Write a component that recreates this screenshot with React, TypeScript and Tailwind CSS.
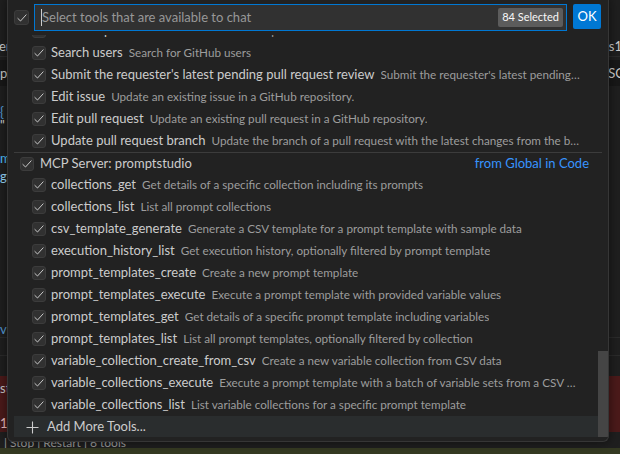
import React from "react"

interface Tool {
  label: string
  desc: string
}

const githubTools: Tool[] = [
  { label: "Search repositories", desc: "Search for GitHub repositories" },
  { label: "Search users", desc: "Search for GitHub users" },
  {
    label: "Submit the requester's latest pending pull request review",
    desc: "Submit the requester's latest pending pull request review",
  },
  { label: "Edit issue", desc: "Update an existing issue in a GitHub repository." },
  { label: "Edit pull request", desc: "Update an existing pull request in a GitHub repository." },
  {
    label: "Update pull request branch",
    desc: "Update the branch of a pull request with the latest changes from the base branch.",
  },
]

const promptTools: Tool[] = [
  { label: "collections_get", desc: "Get details of a specific collection including its prompts" },
  { label: "collections_list", desc: "List all prompt collections" },
  { label: "csv_template_generate", desc: "Generate a CSV template for a prompt template with sample data" },
  { label: "execution_history_list", desc: "Get execution history, optionally filtered by prompt template" },
  { label: "prompt_templates_create", desc: "Create a new prompt template" },
  { label: "prompt_templates_execute", desc: "Execute a prompt template with provided variable values" },
  { label: "prompt_templates_get", desc: "Get details of a specific prompt template including variables" },
  { label: "prompt_templates_list", desc: "List all prompt templates, optionally filtered by collection" },
  { label: "variable_collection_create_from_csv", desc: "Create a new variable collection from CSV data" },
  {
    label: "variable_collections_execute",
    desc: "Execute a prompt template with a batch of variable sets from a CSV collection",
  },
  { label: "variable_collections_list", desc: "List variable collections for a specific prompt template" },
]

const Check = ({ size = 14 }: { size?: number }) => (
  <div
    className="flex items-center justify-center shrink-0 rounded-[3px] border border-[#3c3c3c] bg-[#313131]"
    style={{ width: size, height: size }}
  >
    <svg width="12" height="12" viewBox="0 0 16 16" fill="none">
      <path d="M2.5 8.6 L6 12 L13.5 3.8" stroke="#cccccc" strokeWidth="1.3" strokeLinecap="round" strokeLinejoin="round" />
    </svg>
  </div>
)

const ToolRow = ({ tool }: { tool: Tool }) => (
  <div className="flex items-center h-[22px] pl-[18px] pr-[22px] gap-[5px] min-w-0">
    <Check />
    <div className="flex items-baseline min-w-0">
      <span className="shrink-0 whitespace-nowrap text-[13px] text-[#cccccc]">{tool.label}</span>
      <span className="ml-[6px] min-w-0 truncate text-[11.7px] text-[#9d9d9d]">{tool.desc}</span>
    </div>
  </div>
)

export default function App() {
  return (
    <div
      className="relative w-[620px] h-[454px] overflow-hidden bg-[#1f1f1f]"
      style={{ fontFamily: "Lato, 'Noto Sans', sans-serif" }}
    >
      {/* editor behind the quick pick */}
      <div className="flex flex-col h-full text-[13px] leading-none text-[#cccccc]">
        <div className="h-[36px] shrink-0" />
        <div className="flex justify-between items-center h-[20px] shrink-0">
          <span className="-ml-[1px]">er</span>
          <span className="mr-[-2px]">s1</span>
        </div>
        <div className="h-px shrink-0 bg-[#2b2b2b]" />
        <div className="h-[3px] shrink-0" />
        <div className="flex justify-between items-center h-[26px] shrink-0 bg-[#181818]">
          <span>pa</span>
          <span className="mr-[-4px]">SC</span>
        </div>
        <div className="h-[19px] shrink-0" />
        <div className="flex items-center h-[14px] shrink-0 text-[#569cd6]">
          <span>{"{"}</span>
        </div>
        <div className="flex items-center h-[12px] shrink-0 text-[#d4d4d4]">
          <span>"</span>
        </div>
        <div className="h-[19px] shrink-0" />
        <div className="flex items-center h-[16px] shrink-0 text-[#4fc1ff]">
          <span>m</span>
        </div>
        <div className="flex items-center h-[20px] shrink-0 text-[#9cdcfe]">
          <span>g</span>
        </div>
        <div className="h-[135px] shrink-0" />
        <div className="flex items-center h-[16px] shrink-0 text-[#569cd6]">
          <span>v</span>
        </div>
        <div className="h-px shrink-0 bg-[#2b2b2b]" />
        <div className="h-[17px] shrink-0" />
        <div className="h-px shrink-0 bg-[#2b2b2b]" />
        <div className="h-[20px] shrink-0" />
        <div className="flex flex-col h-[56px] shrink-0 bg-[#4b1a1a]">
          <span className="mt-[6px] text-[#cccccc]">st</span>
          <span className="mt-[22px] text-[#f0c0c0]">1</span>
        </div>
        <div className="h-[6px] shrink-0" />
        <div className="flex items-center h-[10px] shrink-0 pl-[4px] text-[12px] text-[#9d9d9d] whitespace-nowrap">
          | Stop | Restart | 6 tools
        </div>
        <div className="flex-1 bg-[#353a22]" />
      </div>

      {/* quick pick */}
      <div className="absolute left-[7px] top-0 w-[602px] h-[442px] flex flex-col bg-[#222222] border-x border-b border-[#363636] rounded-b-[6px] shadow-[0_0_8px_2px_rgba(0,0,0,0.36)] overflow-hidden">
        <div className="flex items-start h-[35px] pt-[4px] pl-[6px] pr-[7px] shrink-0">
          <div className="mt-[6px] mr-[5px]">
            <Check size={15} />
          </div>
          <div className="flex items-center h-[27px] w-[533px] border border-[#0078d4] bg-[#313131] pl-[6px] pr-[3px]">
            <div className="w-px h-[17px] bg-[#cccccc]" />
            <span className="flex-1 text-[13px] text-[#989898] whitespace-nowrap">
              Select tools that are available to chat
            </span>
            <span className="flex items-center h-[19px] px-[4px] rounded-[2px] bg-[#5c5c5c] text-[11px] text-[#f8f8f8]">
              84 Selected
            </span>
          </div>
          <button className="ml-[6px] h-[25px] w-[28px] rounded-[2px] bg-[#0078d4] text-[13px] text-white">
            OK
          </button>
        </div>

        <div className="relative flex-1 overflow-hidden">
          <div className="flex flex-col px-[6px] -mt-[15px]">
            {githubTools.map((t) => (
              <ToolRow key={t.label} tool={t} />
            ))}
            <div className="flex items-center h-[22px] pl-[6px] pr-[13px] gap-[6px] border-t border-[#3c3c3c]">
              <Check />
              <span className="flex-1 text-[13px] text-[#cccccc]">MCP Server: promptstudio</span>
              <span className="text-[13px] text-[#3794ff]">from Global in Code</span>
            </div>
            {promptTools.map((t) => (
              <ToolRow key={t.label} tool={t} />
            ))}
            <div className="flex items-center h-[22px] pl-[12px] gap-[8px] bg-[#2a2d2e]">
              <svg width="13" height="13" viewBox="0 0 13 13">
                <path d="M6.5 0.5 V12.5 M0.5 6.5 H12.5" stroke="#cccccc" strokeWidth="1.1" />
              </svg>
              <span className="text-[13px] text-[#cccccc]">Add More Tools...</span>
            </div>
          </div>
          <div className="absolute right-0 bottom-0 w-[10px] h-[86px] bg-[#454545]" />
        </div>
        <div className="h-[4px] shrink-0" />
      </div>
    </div>
  )
}
